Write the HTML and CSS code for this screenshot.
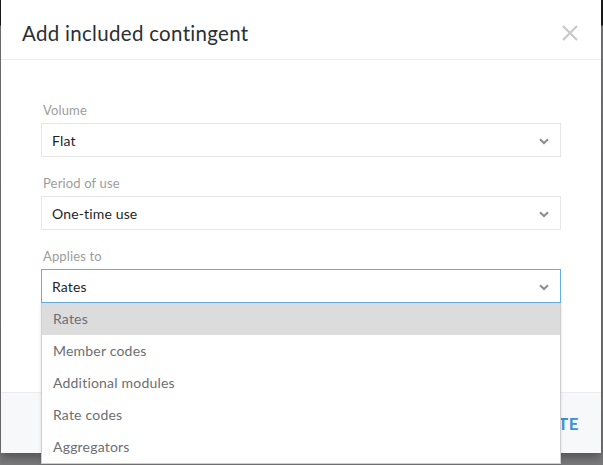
FILE: index.html
```html
<!DOCTYPE html>
<html>
<head>
<meta charset="utf-8">
<link rel="stylesheet" href="styles.css">
</head>
<body>
<div class="backdrop">
  <div class="modal">
    <div class="modal-header">
      <h2 class="modal-title">Add included contingent</h2>
      <button class="close" aria-label="Close">
        <svg width="16" height="16" viewBox="0 0 16 16"><path d="M1 1L15 15M15 1L1 15" stroke="#c9c9c9" stroke-width="2.2" fill="none"/></svg>
      </button>
    </div>
    <div class="modal-body">
      <div class="field">
        <label class="field-label">Volume</label>
        <div class="select">
          <span class="select-value">Flat</span>
          <svg class="chev" width="10" height="7" viewBox="0 0 10 7"><path d="M1 1.2L5 5L9 1.2" stroke="#8c8c8c" stroke-width="2" fill="none"/></svg>
        </div>
      </div>
      <div class="field">
        <label class="field-label">Period of use</label>
        <div class="select">
          <span class="select-value">One-time use</span>
          <svg class="chev" width="10" height="7" viewBox="0 0 10 7"><path d="M1 1.2L5 5L9 1.2" stroke="#8c8c8c" stroke-width="2" fill="none"/></svg>
        </div>
      </div>
      <div class="field">
        <label class="field-label">Applies to</label>
        <div class="select-wrap">
          <div class="select open">
            <span class="select-value">Rates</span>
            <svg class="chev" width="10" height="7" viewBox="0 0 10 7"><path d="M1 1.2L5 5L9 1.2" stroke="#8c8c8c" stroke-width="2" fill="none"/></svg>
          </div>
          <ul class="menu">
            <li class="menu-item active">Rates</li>
            <li class="menu-item">Member codes</li>
            <li class="menu-item">Additional modules</li>
            <li class="menu-item">Rate codes</li>
            <li class="menu-item">Aggregators</li>
          </ul>
        </div>
      </div>
    </div>
    <div class="modal-footer">
      <button class="btn-create">CREATE</button>
    </div>
  </div>
</div>
</body>
</html>
```
FILE: styles.css
```css
html, body {
  margin: 0;
  padding: 0;
  height: 100%;
}
body {
  font-family: Lato, "Noto Sans", sans-serif;
  background: #7c7c7e;
  overflow: hidden;
}
.backdrop {
  height: 465px;
  background: linear-gradient(to bottom, #1c1c1e 0, #1c1c1e 25px, #808082 26px, #7a7a7c 100%);
  padding: 0 2px 0 1px;
  box-sizing: border-box;
}
.modal {
  background: #fff;
  height: 453px;
  display: flex;
  flex-direction: column;
  box-shadow: 0 4px 10px rgba(0,0,0,0.35);
}
.modal-header {
  height: 59px;
  border-bottom: 1px solid #ececec;
  display: flex;
  align-items: center;
  justify-content: space-between;
  padding: 0 23px 0 21px;
  box-sizing: content-box;
}
.modal-title {
  margin: 0;
  font-size: 20.5px;
  font-weight: 400;
  color: #2b2f33;
  padding-top: 7px;
  letter-spacing: 0.3px;
}
.close {
  background: none;
  border: 0;
  padding: 0;
  margin-top: 6px;
  display: flex;
}
.modal-body {
  flex: 1;
  padding: 42px 40px 0 40px;
}
.field {
  margin-bottom: 18px;
}
.field-label {
  display: block;
  font-size: 13px;
  color: #9c9c9c;
  line-height: 16px;
  margin-bottom: 5px;
  padding-left: 2px;
  letter-spacing: 0.15px;
}
.select-wrap {
  position: relative;
}
.select {
  height: 32px;
  border: 1px solid #e6e6e6;
  display: flex;
  align-items: center;
  justify-content: space-between;
  padding: 0 11px 0 10px;
  font-size: 14px;
  color: #1f1f1f;
  letter-spacing: 0.15px;
}
.select.open {
  border-color: #64aee4;
}
.chev {
  margin-top: 2px;
}
.menu {
  position: absolute;
  left: 0;
  right: 0;
  top: 34px;
  margin: 0;
  padding: 0;
  list-style: none;
  background: #fff;
  border: 1px solid #cfcfcf;
  border-top: 0;
  box-shadow: 0 1px 3px rgba(0,0,0,0.12);
  z-index: 5;
}
.menu-item {
  height: 32px;
  line-height: 32px;
  padding-left: 11px;
  font-size: 14px;
  color: #6b6e72;
  letter-spacing: 0.2px;
}
.menu-item.active {
  background: #dcdcdc;
}
.modal-footer {
  height: 60px;
  background: #f7f8fa;
  border-top: 1px solid #ececee;
  display: flex;
  align-items: center;
  justify-content: flex-end;
  padding: 0 22px;
}
.btn-create {
  background: none;
  border: 0;
  padding: 0;
  font-family: Lato, "Noto Sans", sans-serif;
  font-weight: 700;
  font-size: 17px;
  color: #3b8fdb;
  letter-spacing: 0.5px;
}
```
